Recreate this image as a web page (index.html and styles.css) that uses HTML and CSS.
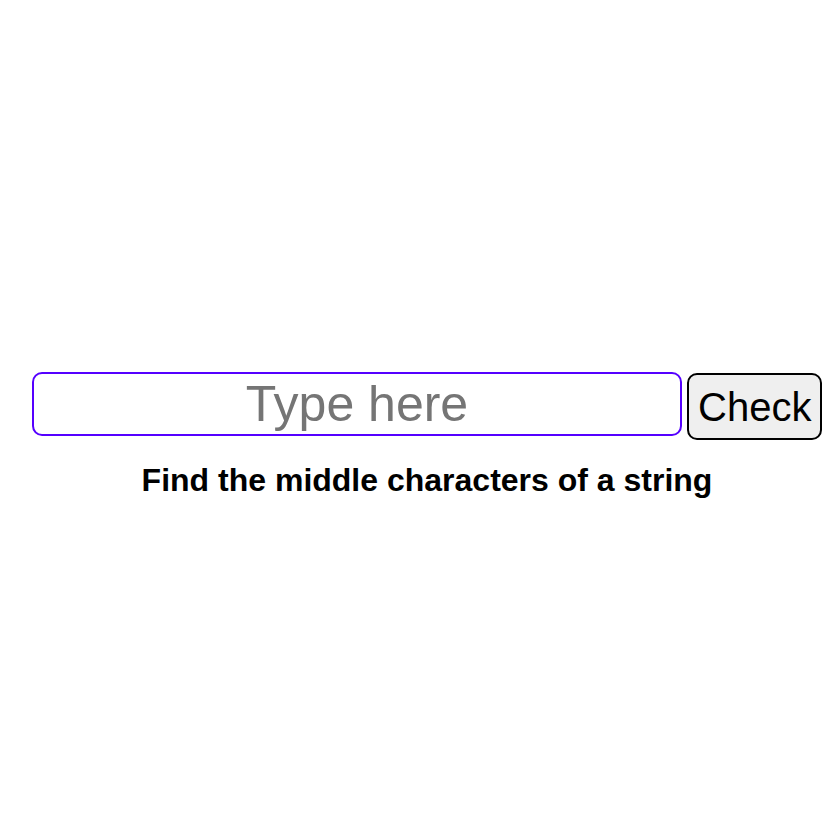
FILE: index.html
```html
<!DOCTYPE html>
<html>
<head>
<meta charset="utf-8">
<link rel="stylesheet" href="styles.css">
</head>
<body>
<div class="container">
  <div class="row">
    <input class="text-input" type="text" placeholder="Type here">
    <button class="check-btn">Check</button>
  </div>
  <h1 class="title">Find the middle characters of a string</h1>
</div>
</body>
</html>
```
FILE: styles.css
```css
body {
  margin: 8px;
  background: #ffffff;
  font-family: "Liberation Sans", Arial, sans-serif;
}
.container {
  width: 790px;
  margin-left: 24px;
  padding-top: 364px;
  text-align: center;
}
.row {
  display: flex;
  align-items: baseline;
  gap: 5px;
}
.text-input {
  box-sizing: border-box;
  width: 650px;
  height: 64px;
  padding: 1px 2px;
  border: 2px solid #5500ff;
  border-radius: 10px;
  font-family: "Liberation Sans", Arial, sans-serif;
  font-size: 50px;
  text-align: center;
  outline: none;
  background: #ffffff;
}
.text-input::placeholder {
  color: #757575;
}
.check-btn {
  box-sizing: border-box;
  padding: 10px 9px 8px;
  border: 2px solid #000000;
  border-radius: 10px;
  background: #efefef;
  color: #000000;
  font-family: "Liberation Sans", Arial, sans-serif;
  font-size: 40px;
  line-height: normal;
}
.title {
  margin: 22px 0 0 0;
  font-size: 32px;
  font-weight: bold;
  color: #000000;
}
```
